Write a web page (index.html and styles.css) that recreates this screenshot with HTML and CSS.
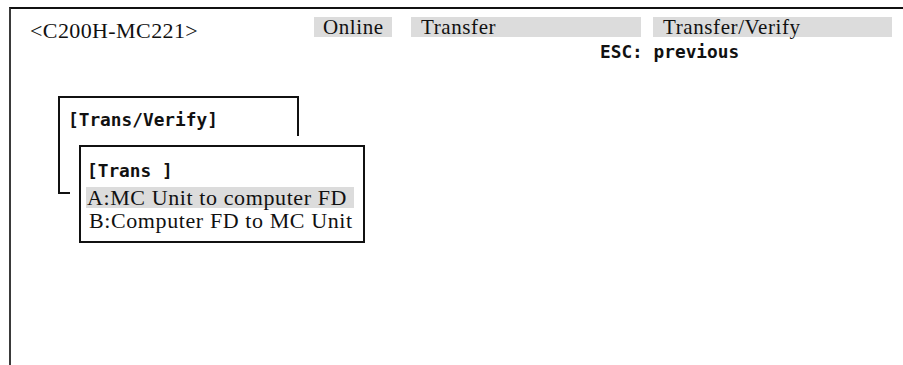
FILE: index.html
```html
<!DOCTYPE html>
<html lang="en">
  <head>
    <meta charset="UTF-8" />
    <title>C200H-MC221 Transfer/Verify</title>
    <link rel="stylesheet" href="styles.css">
  </head>
  <body>
    <div class="frame">
      <div class="header">
        <div class="title">&lt;C200H-MC221&gt;</div>
        <div class="tab tab-online">Online</div>
        <div class="tab tab-transfer">Transfer</div>
        <div class="tab tab-verify">Transfer/Verify</div>
      </div>
      <div class="esc">ESC: previous</div>

      <div class="windows">
        <div class="win win-outer">
          <div class="win-title">[Trans/Verify]</div>
        </div>
        <div class="win win-inner">
          <div class="win-title">[Trans ]</div>
          <div class="item selected">A:MC Unit to computer FD</div>
          <div class="item">B:Computer FD to MC Unit</div>
        </div>
      </div>
    </div>
  </body>
</html>
```

FILE: styles.css
```css
body {
  margin: 0;
  background: #fff;
  color: #111;
  font-family: "Liberation Serif", "Times New Roman", serif;
}
.frame {
  margin: 7px 0 0 9px;
  height: 356px;
  border-top: 2px solid #111;
  border-left: 2px solid #3a3a3a;
}
.header {
  display: flex;
  align-items: flex-start;
  padding-top: 8px;
  font-size: 21px;
  letter-spacing: 0.6px;
}
.title {
  width: 284px;
  padding-left: 19px;
  line-height: 20px;
  padding-top: 4px;
  font-size: 22px;
  letter-spacing: 0.4px;
}
.tab {
  background: #dcdcdc;
  height: 20px;
  line-height: 20px;
  padding-left: 9px;
  box-sizing: border-box;
  white-space: nowrap;
}
.tab-online {
  width: 78px;
}
.tab-transfer {
  width: 230px;
  margin-left: 19px;
  padding-left: 10px;
}
.tab-verify {
  width: 239px;
  margin-left: 12px;
  padding-left: 10px;
}
.esc {
  margin: 2px 0 0 589px;
  font-family: "DejaVu Sans Mono", "Liberation Mono", monospace;
  font-size: 17.8px;
  line-height: 18px;
  font-weight: bold;
}
.windows {
  padding: 35px 0 0 47px;
}
.win {
  background: #fff;
  border: 2px solid #111;
  box-sizing: border-box;
  height: 98px;
}
.win-outer {
  width: 241px;
  padding: 12px 0 0 8px;
}
.win-inner {
  position: relative;
  width: 286px;
  margin: -49px 0 0 21px;
  padding: 14px 0 0 5px;
  box-shadow: 0 0 0 9px #fff;
}
.win-title {
  font-family: "DejaVu Sans Mono", "Liberation Mono", monospace;
  font-size: 17.8px;
  line-height: 20px;
  font-weight: bold;
}
.win-inner .win-title {
  padding-left: 1px;
  margin-bottom: 6px;
}
.item {
  font-size: 22px;
  line-height: 21px;
  letter-spacing: 0.6px;
  width: 267px;
  padding-left: 1px;
  white-space: nowrap;
}
.item + .item {
  margin-top: 2px;
  padding-left: 3px;
}
.selected {
  background: #dcdcdc;
}
```
